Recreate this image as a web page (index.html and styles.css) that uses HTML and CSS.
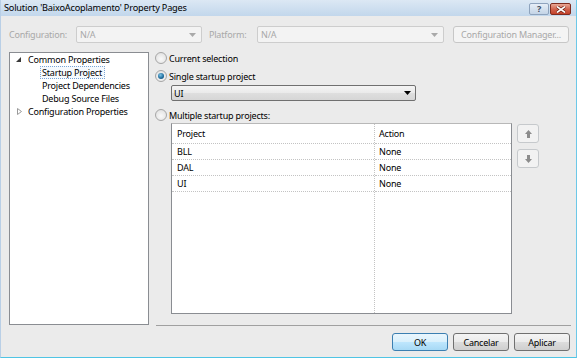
FILE: index.html
```html
<!DOCTYPE html>
<html>
<head>
<meta charset="utf-8">
<link rel="stylesheet" href="styles.css">
</head>
<body>
<div class="window">
  <div class="titlebar">
    <span class="title">Solution 'BaixoAcoplamento' Property Pages</span>
    <div class="caption-buttons">
      <span class="cbtn help">?</span>
      <span class="cbtn close"><svg width="10" height="7" viewBox="0 0 10 7"><path d="M1 0.5 L9 6.5 M9 0.5 L1 6.5" stroke="#6b1d10" stroke-width="3"/><path d="M1 0.5 L9 6.5 M9 0.5 L1 6.5" stroke="#ffffff" stroke-width="1.6"/></svg></span>
    </div>
  </div>
  <div class="content">
    <div class="config-row">
      <span class="cfg-label lbl1">Configuration:</span>
      <div class="combo disabled combo1"><span>N/A</span><svg class="dd" width="7" height="4" viewBox="0 0 7 4"><path d="M0 0 H7 L3.5 4 Z" fill="#a9a9a9"/></svg></div>
      <span class="cfg-label lbl2">Platform:</span>
      <div class="combo disabled combo2"><span>N/A</span><svg class="dd" width="7" height="4" viewBox="0 0 7 4"><path d="M0 0 H7 L3.5 4 Z" fill="#a9a9a9"/></svg></div>
      <div class="btn disabled cfgmgr">Configuration Manager...</div>
    </div>
    <div class="main">
      <div class="tree">
        <div class="node lvl0"><svg class="tw" width="11" height="13" viewBox="0 0 11 13"><path d="M6 4 L6 9 L1 9 Z" fill="#3a3a3a"/></svg><span>Common Properties</span></div>
        <div class="node lvl1"><span class="sel">Startup Project</span></div>
        <div class="node lvl1"><span>Project Dependencies</span></div>
        <div class="node lvl1"><span>Debug Source Files</span></div>
        <div class="node lvl0"><svg class="tw" width="11" height="13" viewBox="0 0 11 13"><path d="M2.5 3.5 L6.5 6.5 L2.5 9.5 Z" fill="#ffffff" stroke="#9a9a9a" stroke-width="1"/></svg><span>Configuration Properties</span></div>
      </div>
      <div class="page">
        <div class="opt opt1"><span class="radio"></span><span>Current selection</span></div>
        <div class="opt opt2"><span class="radio on"></span><span>Single startup project</span></div>
        <div class="combo single"><span>UI</span><svg class="dd" width="7" height="4" viewBox="0 0 7 4"><path d="M0 0 H7 L3.5 4 Z" fill="#000"/></svg></div>
        <div class="opt opt3"><span class="radio"></span><span>Multiple startup projects:</span></div>
        <div class="grid-row">
          <div class="grid">
            <div class="col col-project">
              <div class="cell head">Project</div>
              <div class="cell">BLL</div>
              <div class="cell">DAL</div>
              <div class="cell">UI</div>
            </div>
            <div class="col col-action">
              <div class="cell head">Action</div>
              <div class="cell">None</div>
              <div class="cell">None</div>
              <div class="cell">None</div>
            </div>
          </div>
          <div class="movers">
            <div class="mbtn"><svg width="7" height="8" viewBox="0 0 7 8"><path d="M3.5 0 L7 4 L5 4 L5 8 L2 8 L2 4 L0 4 Z" fill="#8c8c8c"/></svg></div>
            <div class="mbtn"><svg width="7" height="8" viewBox="0 0 7 8"><path d="M3.5 8 L7 4 L5 4 L5 0 L2 0 L2 4 L0 4 Z" fill="#8c8c8c"/></svg></div>
          </div>
        </div>
        <div class="separator"></div>
      </div>
    </div>
    <div class="footer">
      <div class="btn default">OK</div>
      <div class="btn">Cancelar</div>
      <div class="btn">Aplicar</div>
    </div>
  </div>
</div>
</body>
</html>
```
FILE: styles.css
```css
* { box-sizing: border-box; }
html, body { margin: 0; padding: 0; }
body {
  width: 577px;
  height: 358px;
  overflow: hidden;
  font-family: "Noto Sans", sans-serif;
  font-size: 9px;
  letter-spacing: -0.2px;
  color: #000;
  background: #ebebeb;
}
.window {
  width: 577px;
  height: 358px;
  display: flex;
  flex-direction: column;
  border-left: 1px solid #b9cfe6;
  border-right: 1px solid #6cc8e8;
  border-bottom: 1px solid #4fc4e4;
  background: #ebebeb;
}
.titlebar {
  height: 16px;
  display: flex;
  align-items: center;
  padding: 0 5px 0 3px;
  background: linear-gradient(#dce8f4, #c2d7ec);
}
.title { font-size: 9.2px; line-height: 16px; }
.caption-buttons { margin-left: auto; display: flex; gap: 1px; align-self: flex-start; margin-top: 3px; }
.cbtn {
  height: 12px;
  border-radius: 2px;
  display: flex;
  align-items: center;
  justify-content: center;
}
.help {
  width: 20px;
  border: 1px solid #8ea3bd;
  background: linear-gradient(#e6eef7, #c4d4e6);
  color: #3b4a5e;
  font-weight: bold;
  font-size: 9px;
  line-height: 10px;
}
.close {
  width: 21px;
  border: 1px solid #7e2c1f;
  background: linear-gradient(#e9a896, #d0604a 55%, #c3412a);
}
.content {
  flex: 1;
  display: flex;
  flex-direction: column;
  padding: 10px 5px 0 8px;
}
.config-row { display: flex; align-items: center; height: 17px; }
.cfg-label { color: #a8a8a8; }
.lbl1 { width: 67px; }
.lbl2 { width: 48px; margin-left: 7px; }
.combo {
  height: 17px;
  display: flex;
  align-items: center;
  padding-left: 3px;
  padding-right: 5px;
  border-radius: 2px;
}
.combo .dd { margin-left: auto; }
.combo.disabled {
  border: 1px solid #cdcdcd;
  background: #f3f3f3;
  color: #a8a8a8;
}
.combo1 { width: 126px; }
.combo2 { width: 187px; }
.btn {
  height: 18px;
  display: flex;
  align-items: center;
  justify-content: center;
  border-radius: 3px;
  border: 1px solid #707070;
  background: linear-gradient(#f4f4f4 0%, #ebebeb 50%, #dcdcdc 51%, #cfcfcf 100%);
}
.btn.disabled {
  border-color: #c7c7c7;
  background: #f4f4f4;
  color: #a8a8a8;
}
.cfgmgr { width: 116px; height: 17px; margin-left: 9px; }
.main { display: flex; margin-top: 9px; height: 274px; }
.tree {
  width: 140px;
  height: 273px;
  background: #fff;
  border: 1px solid #8a8d92;
  padding-top: 0;
}
.node { height: 13px; display: flex; align-items: center; white-space: nowrap; }
.lvl0 { padding-left: 5px; }
.lvl0 .tw { margin-right: 0; flex: none; }
.lvl1 { padding-left: 30px; }
.node span { line-height: 11px; padding: 0 2px 0 1px; border: 1px solid transparent; }
.node .sel {
  border: 1px dotted #7aa6d6;
  background: #f6fafe;
  line-height: 11px;
}
.page {
  flex: 1;
  margin-left: 6px;
  display: flex;
  flex-direction: column;
}
.opt { height: 12px; display: flex; align-items: center; white-space: nowrap; }
.opt2 { margin-top: 6px; }
.opt3 { margin-top: 8px; }
.radio {
  width: 12px;
  height: 12px;
  margin-right: 2px;
  border-radius: 50%;
  border: 1px solid #a6a6a6;
  background: radial-gradient(circle at 50% 60%, #f9f9f9 0%, #e2e2e2 80%);
  display: flex;
  align-items: center;
  justify-content: center;
  flex: none;
}
.radio.on::after {
  content: "";
  width: 6px;
  height: 6px;
  border-radius: 50%;
  background: radial-gradient(circle at 40% 35%, #7ec3e6 0%, #1d6a9a 60%, #0f3f5e 100%);
}
.combo.single {
  margin-top: 3px;
  margin-left: 16px;
  width: 245px;
  height: 16px;
  border: 1px solid #707070;
  background: linear-gradient(#f4f4f4 0%, #eaeaea 50%, #dedede 51%, #d6d6d6 100%);
  padding-left: 2px;
  padding-right: 4px;
}
.grid-row { display: flex; margin-top: 2px; margin-left: 16px; }
.grid {
  width: 341px;
  height: 191px;
  display: flex;
  background: #fff;
  border: 1px solid #8a8d92;
  border-top-color: #b8b8b8;
}
.col { display: flex; flex-direction: column; }
.col-project { width: 203px; border-right: 1px dotted #c3c3c3; }
.col-action { flex: 1; }
.cell {
  height: 16px;
  line-height: 15px;
  border-bottom: 1px dotted #c3c3c3;
  padding-left: 5px;
  white-space: nowrap;
}
.cell.head { height: 20px; line-height: 19px; }
.col-action .cell { padding-left: 4px; }
.movers { display: flex; flex-direction: column; gap: 6px; margin-left: 5px; margin-top: 1px; }
.mbtn {
  width: 22px;
  height: 19px;
  border: 1px solid #c6c9cc;
  border-radius: 3px;
  background: #f2f2f2;
  display: flex;
  align-items: center;
  justify-content: center;
}
.separator {
  margin-top: auto;
  margin-left: 1px;
  height: 1px;
  background: #a0a0a0;
}
.footer {
  display: flex;
  justify-content: flex-end;
  gap: 5px;
  padding-top: 7px;
  padding-right: 1px;
}
.footer .btn { width: 56px; }
.btn.default {
  border-color: #3c7fb1;
  background: linear-gradient(#eaf6fd 0%, #d9f0fc 50%, #bee6fd 51%, #a7d9f5 100%);
}
```
